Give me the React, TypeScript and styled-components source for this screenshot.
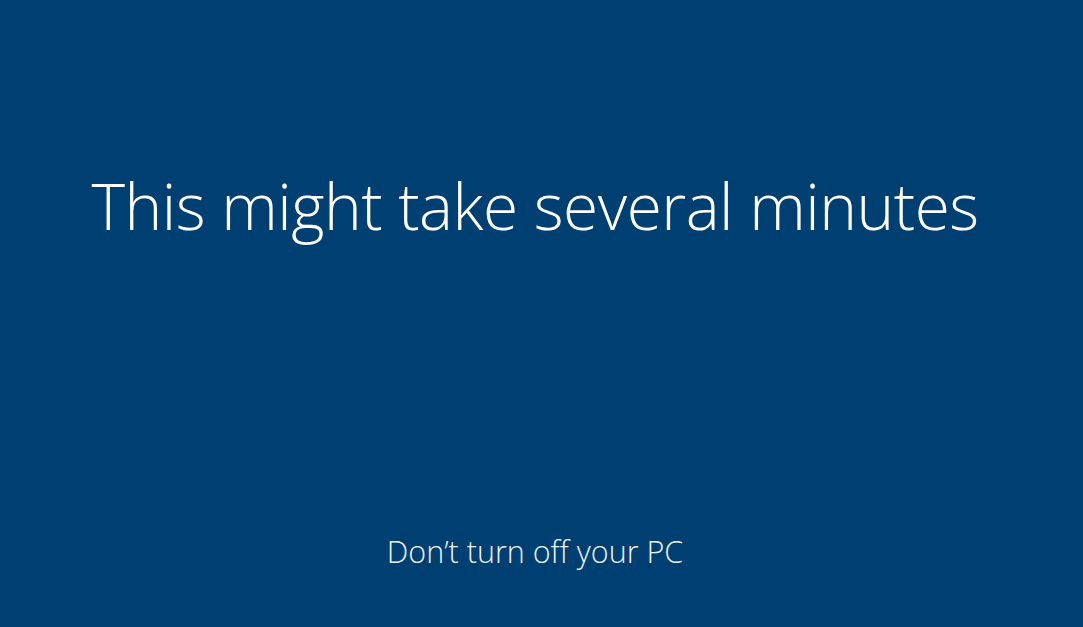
import styled, { createGlobalStyle } from "styled-components";

const GlobalStyle = createGlobalStyle`
  html, body {
    margin: 0;
    padding: 0;
    background: #003f71;
  }
`;

export default function App() {
  return (
    <>
      <GlobalStyle />
      <Screen>
        <Headline>This might take several minutes</Headline>
        <Footer>Don’t turn off your PC</Footer>
      </Screen>
    </>
  );
}

const Screen = styled.div`
  width: 1083px;
  height: 627px;
  background: #003f71;
  color: #fff;
  font-family: "Open Sans", "Noto Sans", sans-serif;
  font-weight: 300;
  display: flex;
  flex-direction: column;
  align-items: center;
  box-sizing: border-box;
  padding: 161px 13px 0 0;
`;

const Headline = styled.h1`
  margin: 0;
  font-size: 64px;
  font-weight: 300;
  line-height: 90px;
  letter-spacing: -0.5px;
`;

const Footer = styled.div`
  margin-top: auto;
  margin-bottom: 56px;
  font-size: 30.5px;
  line-height: 40px;
  color: #eef2f6;
`;
